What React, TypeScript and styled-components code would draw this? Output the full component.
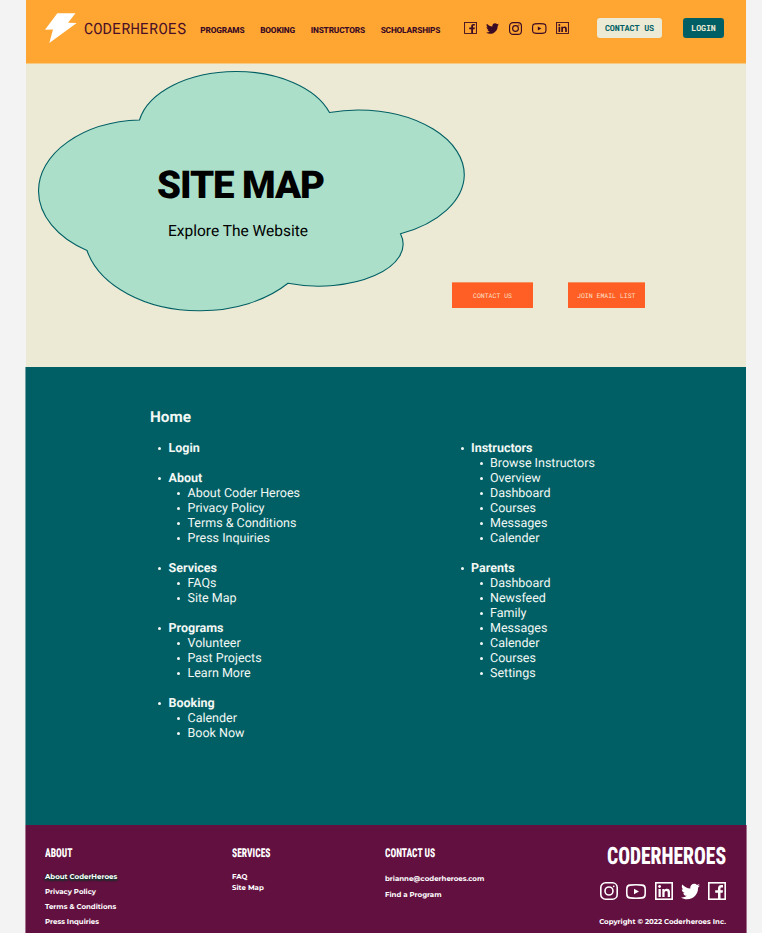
import React from 'react';
import styled, { createGlobalStyle } from 'styled-components';
import { FaTwitter } from 'react-icons/fa';

const color = {
  orange: '#ffa532',
  cream: '#ece9d4',
  teal: '#005f64',
  mint: '#abdfc9',
  plum: '#62103f',
  dark: '#3a0b24',
  coral: '#ff5e25',
};

const GlobalStyle = createGlobalStyle`
  *, *::before, *::after { box-sizing: border-box; }
  body {
    margin: 0;
    background: #f3f3f3;
    font-family: Roboto, "Liberation Sans", sans-serif;
    text-rendering: geometricPrecision;
  }
  ul { list-style: none; margin: 0; padding: 0; }
  h1, h2, h3, p { margin: 0; }
  a { color: inherit; text-decoration: none; }
  button { border: 0; padding: 0; cursor: pointer; text-rendering: inherit; }
`;

const Page = styled.div`
  width: 762px;
  height: 933px;
  overflow: hidden;
  display: flex;
  flex-direction: column;
`;

/* ---------- header ---------- */

const Header = styled.header`
  width: 720px;
  height: 64px;
  margin-left: 26px;
  padding: 0 22px 7px 19px;
  display: flex;
  align-items: center;
  background: ${color.orange};
  border-bottom: 1px solid #f6c982;
`;

const Bolt = styled.svg`
  width: 32px;
  height: 30px;
  flex: none;
`;

const Brand = styled.span`
  width: 102px;
  margin: 1px 0 0 7px;
  font: 400 15.5px/20px "Roboto Mono", "Liberation Mono", monospace;
  color: #4a1026;
`;

const Nav = styled.nav`
  display: flex;
  justify-content: space-between;
  width: 240px;
  margin: 5px 0 0 14.3px;
  font-size: 8.3px;
  line-height: 12px;
  font-weight: 800;
  letter-spacing: -0.17px;
  color: ${color.dark};
`;

const HeaderSocial = styled.div`
  display: flex;
  align-items: center;
  justify-content: space-between;
  width: 105px;
  margin-left: 23.5px;
  color: ${color.dark};
`;

const Icon = styled.svg<{ $w: number; $h: number }>`
  width: ${(p) => p.$w}px;
  height: ${(p) => p.$h}px;
  flex: none;
  display: block;
  overflow: visible;
`;

const Bird = styled(FaTwitter)<{ $s: number }>`
  width: ${(p) => p.$s}px;
  height: ${(p) => p.$s}px;
  flex: none;
`;

const PillGroup = styled.div`
  display: flex;
  gap: 21px;
  margin-left: auto;
`;

const Pill = styled.button<{ $w: number; $solid?: boolean }>`
  width: ${(p) => p.$w}px;
  height: 20px;
  padding-top: 1px;
  border-radius: 3px;
  font: 700 8.4px/19px "Roboto Mono", "Liberation Mono", monospace;
  letter-spacing: -0.12px;
  color: ${(p) => (p.$solid ? color.cream : color.teal)};
  background: ${(p) => (p.$solid ? color.teal : color.cream)};
`;

/* ---------- hero ---------- */

const Hero = styled.section`
  position: relative;
  width: 720px;
  height: 303px;
  margin-left: 26px;
  background: ${color.cream};
  display: flex;
  flex-direction: column;
`;

const Cloud = styled.svg`
  position: absolute;
  left: 12px;
  top: 7px;
  width: 428px;
  height: 242px;
  overflow: visible;
`;

const HeroCopy = styled.div`
  position: relative;
  width: 429px;
  height: 218px;
  padding-top: 98px;
  display: flex;
  flex-direction: column;
  align-items: center;
  color: #000;
`;

const HeroTitle = styled.h1`
  font-size: 38.4px;
  line-height: 48px;
  font-weight: 900;
  letter-spacing: -1.05px;
`;

const HeroSubtitle = styled.p`
  margin: 11px 5px 0 0;
  font-size: 15.5px;
  line-height: 20px;
`;

const HeroActions = styled.div`
  display: flex;
  gap: 35px;
  padding-left: 426px;
`;

const HeroButton = styled.button<{ $w: number }>`
  width: ${(p) => p.$w}px;
  height: 26px;
  background: ${color.coral};
  border-top: 1px solid #f78f5f;
  font: 400 6.5px/25px "Roboto Mono", "Liberation Mono", monospace;
  color: #fbe0c8;
`;

/* ---------- site map ---------- */

const MapSection = styled.main`
  width: 721px;
  height: 458px;
  margin-left: 25px;
  padding: 40px 0 0 124px;
  border-left: 1px solid #6fa0a2;
  background: ${color.teal};
  color: #f2f7f4;
`;

const MapTitle = styled.h2`
  font-size: 15.3px;
  line-height: 20px;
  font-weight: 700;
`;

const MapColumns = styled.div`
  display: grid;
  grid-template-columns: 302.5px 1fr;
  margin-top: 13.5px;
`;

const Groups = styled.ul`
  display: flex;
  flex-direction: column;
  gap: 15px;
  font-size: 12.5px;
  line-height: 15px;
`;

const Entry = styled.li<{ $level: 1 | 2 }>`
  display: flex;
  align-items: center;
  height: 15px;
  padding-left: ${(p) => (p.$level === 1 ? 8 : 27)}px;
  font-weight: ${(p) => (p.$level === 1 ? 700 : 400)};

  &::before {
    content: '';
    width: 3px;
    height: 3px;
    margin: 0 7.5px 0 0;
    border-radius: 50%;
    background: currentColor;
  }
`;

/* ---------- footer ---------- */

const Footer = styled.footer`
  width: 722px;
  height: 108px;
  margin-left: 25px;
  padding: 0 20px 0 19px;
  display: grid;
  grid-template-columns: 187px 153px 1fr 128px;
  border: solid #a3718c;
  border-width: 0 1px;
  background: ${color.plum};
  color: #fff;
`;

const FooterColumn = styled.div`
  padding-top: 20px;
`;

const FooterHeading = styled.h3`
  width: max-content;
  font: 800 12.2px/16px "Roboto Condensed", Roboto, sans-serif;
  transform: scaleX(0.78);
  transform-origin: left;
`;

const FooterLinks = styled.ul<{ $top: number; $step: number }>`
  margin-top: ${(p) => p.$top}px;
  font: 700 7px/${(p) => p.$step}px Montserrat, Inter, sans-serif;
  white-space: nowrap;
`;

const FooterLink = styled.li<{ $active?: boolean }>`
  text-shadow: ${(p) => (p.$active ? '0 1.5px 1.5px #14352b, 0 0 2px #14352b, 0 1px 2px #14352b' : 'none')};
`;

const FooterEnd = styled.div`
  display: flex;
  flex-direction: column;
  align-items: flex-end;
  padding-top: 16px;
`;

const FooterBrand = styled.div`
  font: 800 24px/30px "Roboto Condensed", Roboto, sans-serif;
  transform: scaleX(0.815);
  transform-origin: right;
`;

const FooterSocial = styled.div`
  width: 126px;
  height: 18px;
  margin-top: 11px;
  display: flex;
  align-items: center;
  justify-content: space-between;
`;

const Copyright = styled.p`
  margin-top: 16px;
  font: 700 7px/12px Montserrat, Inter, sans-serif;
  white-space: nowrap;
`;

/* ---------- icons ---------- */

type Size = { w: number; h: number; stroke?: number };

const Facebook = ({ w, h, stroke = 1.6 }: Size) => (
  <Icon $w={w} $h={h} viewBox="0 0 18 18" preserveAspectRatio="none">
    <rect x=".8" y=".8" width="16.4" height="16.4" fill="none" stroke="currentColor" strokeWidth={stroke} />
    <path
      d="M10 17v-6.200H7.200V8.200H10V6.400C10 4.100 11.300 3 13.200 3c.9 0 1.600.1 1.800.1v2.300h-1.300c-1 0-1.200.5-1.200 1.200v1.600H15l-.4 2.600h-2.100V17z"
      fill="currentColor"
    />
  </Icon>
);

const Instagram = ({ w, h, stroke = 1.6 }: Size) => (
  <Icon $w={w} $h={h} viewBox="0 0 18 18" fill="none" stroke="currentColor" strokeWidth={stroke}>
    <rect x=".8" y=".8" width="16.4" height="16.4" rx="4.8" />
    <circle cx="9" cy="9" r="4" />
    <circle cx="13.7" cy="4.3" r=".9" fill="currentColor" stroke="none" />
  </Icon>
);

const Youtube = ({ w, h, stroke = 1.6 }: Size) => (
  <Icon $w={w} $h={h} viewBox="0 0 20 15" fill="none" stroke="currentColor" strokeWidth={stroke}>
    <path d="M4 1.1C8 .7 12 .7 16 1.1c2 .2 3 1.200 3.100 3 .2 2.200.2 4.600 0 6.800-.1 1.800-1.100 2.800-3.100 3-4 .4-8 .4-12 0-2-.2-3-1.200-3.100-3-.2-2.200-.2-4.600 0-6.800C1 2.300 2 1.300 4 1.100z" />
    <path d="M8 4.700v5.600l5-2.800z" fill="currentColor" stroke="none" />
  </Icon>
);

const Linkedin = ({ w, h, stroke = 1.6 }: Size) => (
  <Icon $w={w} $h={h} viewBox="0 0 18 18" preserveAspectRatio="none">
    <rect x=".8" y=".8" width="16.4" height="16.4" fill="none" stroke="currentColor" strokeWidth={stroke} />
    <circle cx="4.600" cy="4.500" r="1.400" fill="currentColor" />
    <path
      d="M3.500 7h2.300v8H3.500zM7.300 7h2.200v1.100C10 7.300 10.800 6.800 12 6.800c2.300 0 3 1.500 3 3.600V15h-2.300v-4.100c0-1.200-.3-2-1.400-2-1.200 0-1.700.8-1.700 2V15H7.300z"
      fill="currentColor"
    />
  </Icon>
);

/* ---------- content ---------- */

type Group = { title: string; items: string[] };

const leftGroups: Group[] = [
  { title: 'Login', items: [] },
  { title: 'About', items: ['About Coder Heroes', 'Privacy Policy', 'Terms & Conditions', 'Press Inquiries'] },
  { title: 'Services', items: ['FAQs', 'Site Map'] },
  { title: 'Programs', items: ['Volunteer', 'Past Projects', 'Learn More'] },
  { title: 'Booking', items: ['Calender', 'Book Now'] },
];

const rightGroups: Group[] = [
  { title: 'Instructors', items: ['Browse Instructors', 'Overview', 'Dashboard', 'Courses', 'Messages', 'Calender'] },
  { title: 'Parents', items: ['Dashboard', 'Newsfeed', 'Family', 'Messages', 'Calender', 'Courses', 'Settings'] },
];

const GroupList = ({ groups }: { groups: Group[] }) => (
  <Groups>
    {groups.map((g) => (
      <li key={g.title}>
        <ul>
          <Entry $level={1}>{g.title}</Entry>
          {g.items.map((item) => (
            <Entry $level={2} key={item}>{item}</Entry>
          ))}
        </ul>
      </li>
    ))}
  </Groups>
);

export default function App() {
  return (
    <>
      <GlobalStyle />
      <Page>
        <Header>
          <Bolt viewBox="45 13 32 30">
            <path d="M57.300 13.300H75.500L68 22.700 76.700 23 49.300 43 53 29.500 45 29.700z" fill="#fff" />
          </Bolt>
          <Brand>CODERHEROES</Brand>
          <Nav>
            <a href="#programs">PROGRAMS</a>
            <a href="#booking">BOOKING</a>
            <a href="#instructors">INSTRUCTORS</a>
            <a href="#scholarships">SCHOLARSHIPS</a>
          </Nav>
          <HeaderSocial>
            <Facebook w={13} h={12} stroke={1.3} />
            <Bird $s={13} />
            <Instagram w={13} h={13} />
            <Youtube w={14.5} h={11} />
            <Linkedin w={13} h={12} stroke={1.3} />
          </HeaderSocial>
          <PillGroup>
            <Pill $w={65}>CONTACT US</Pill>
            <Pill $w={41} $solid>LOGIN</Pill>
          </PillGroup>
        </Header>

        <Hero>
          <Cloud viewBox="38 71 428 242">
            <path
              d="M139.500 120A98 59.500 0 0 1 235.500 71.500A98 59.500 0 0 1 329.500 112.500A106.500 65 0 0 1 358 110A106.500 65 0 0 1 464.300 175A106.500 65 0 0 1 400.500 233.800A84.500 42 0 0 1 288 283.300A115 78 0 0 1 199.500 310.700A115 78 0 0 1 87 250.500A105.500 71 0 0 1 38.500 191A105.500 71 0 0 1 139.500 120Z"
              fill={color.mint}
              stroke={color.teal}
              strokeWidth="1.100"
            />
          </Cloud>
          <HeroCopy>
            <HeroTitle>SITE MAP</HeroTitle>
            <HeroSubtitle>Explore The Website</HeroSubtitle>
          </HeroCopy>
          <HeroActions>
            <HeroButton $w={81}>CONTACT US</HeroButton>
            <HeroButton $w={76.5}>JOIN EMAIL LIST</HeroButton>
          </HeroActions>
        </Hero>

        <MapSection>
          <MapTitle>Home</MapTitle>
          <MapColumns>
            <GroupList groups={leftGroups} />
            <GroupList groups={rightGroups} />
          </MapColumns>
        </MapSection>

        <Footer>
          <FooterColumn>
            <FooterHeading>ABOUT</FooterHeading>
            <FooterLinks $top={7.5} $step={15}>
              <FooterLink $active>About CoderHeroes</FooterLink>
              <FooterLink>Privacy Policy</FooterLink>
              <FooterLink>Terms &amp; Conditions</FooterLink>
              <FooterLink>Press Inquiries</FooterLink>
            </FooterLinks>
          </FooterColumn>
          <FooterColumn>
            <FooterHeading>SERVICES</FooterHeading>
            <FooterLinks $top={9.5} $step={11}>
              <FooterLink>FAQ</FooterLink>
              <FooterLink>Site Map</FooterLink>
            </FooterLinks>
          </FooterColumn>
          <FooterColumn>
            <FooterHeading>CONTACT US</FooterHeading>
            <FooterLinks $top={9.5} $step={16}>
              <FooterLink>brianne@coderheroes.com</FooterLink>
              <FooterLink>Find a Program</FooterLink>
            </FooterLinks>
          </FooterColumn>
          <FooterEnd>
            <FooterBrand>CODERHEROES</FooterBrand>
            <FooterSocial>
              <Instagram w={18} h={18} />
              <Youtube w={20} h={15} />
              <Linkedin w={18} h={18} />
              <Bird $s={19} />
              <Facebook w={18} h={18} />
            </FooterSocial>
            <Copyright>Copyright © 2022 Coderheroes Inc.</Copyright>
          </FooterEnd>
        </Footer>
      </Page>
    </>
  );
}
